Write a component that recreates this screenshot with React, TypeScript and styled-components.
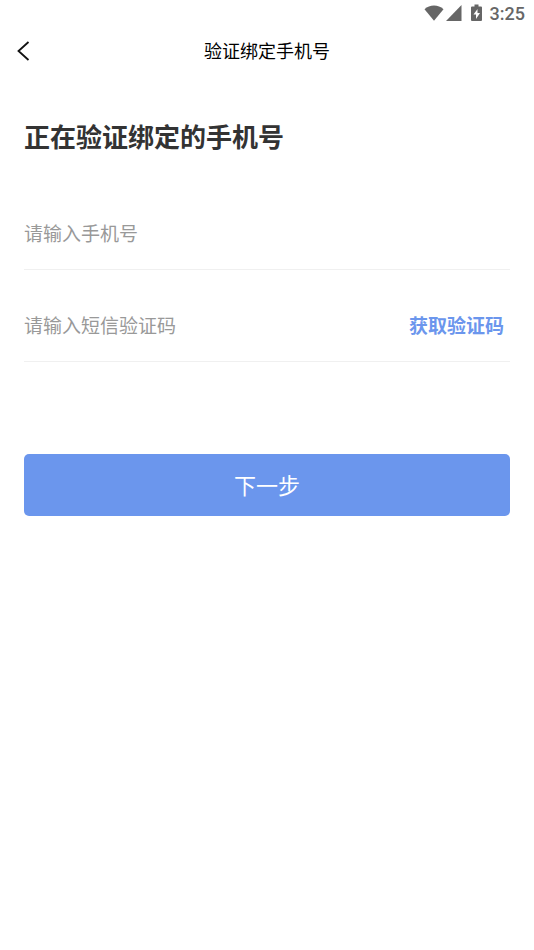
import React, { useState } from "react";
import styled, { createGlobalStyle } from "styled-components";

const GlobalStyle = createGlobalStyle`
  *, *::before, *::after { box-sizing: border-box; }
  body {
    margin: 0;
    background: #fff;
    font-family: "Noto Sans CJK SC", sans-serif;
  }
`;

const Page = styled.div`
  display: flex;
  flex-direction: column;
  min-height: 100vh;
  background: #fff;
`;

const StatusBar = styled.div`
  display: flex;
  justify-content: flex-end;
  align-items: center;
  height: 28px;
  padding-right: 9px;
  color: #666;
`;

const StatusIcons = styled.div`
  display: flex;
  align-items: center;
  height: 28px;
  padding-bottom: 2px;
`;

const StatusIcon = styled.svg<{ $gap: number }>`
  display: block;
  margin-right: ${({ $gap }) => $gap}px;
  fill: currentColor;
`;

const Clock = styled.time`
  font: 500 18px/28px Roboto, sans-serif;
`;

const NavBar = styled.header`
  display: grid;
  grid-template-columns: 48px 1fr 48px;
  height: 46px;
`;

const BackButton = styled.button`
  display: flex;
  align-items: center;
  height: 46px;
  padding: 0 0 0 16px;
  border: 0;
  background: none;
  color: #111;
`;

const NavTitle = styled.h1`
  margin: 0;
  text-align: center;
  font-size: 18px;
  font-weight: 400;
  line-height: 44px;
  color: #000;
`;

const Form = styled.form`
  display: flex;
  flex-direction: column;
  padding: 44px 24px 0;
`;

const Heading = styled.h2`
  margin: 0 0 24px;
  font-size: 26px;
  font-weight: 700;
  line-height: 36px;
  color: #333;
`;

const Field = styled.div`
  display: flex;
  align-items: center;
  height: 92px;
  padding-top: 18px;
  border-bottom: 1px solid #f0f0f0;
`;

const TextInput = styled.input`
  flex: 1;
  min-width: 0;
  padding: 0;
  border: 0;
  outline: 0;
  background: none;
  font: 400 19px/28px "Noto Sans CJK SC", sans-serif;
  color: #333;
  &::placeholder { color: #999; opacity: 1; }
`;

const CodeButton = styled.button`
  padding: 0 6px;
  border: 0;
  background: none;
  font: 700 19px/28px "Noto Sans CJK SC", sans-serif;
  color: #6b96ed;
`;

const SubmitButton = styled.button`
  height: 62px;
  margin-top: 92px;
  padding: 0 0 2px;
  border: 0;
  border-radius: 5px;
  background: #6b96ed;
  font: 400 22px/32px "Noto Sans CJK SC", sans-serif;
  color: #fff;
`;

export default function App() {
  const [phone, setPhone] = useState("");
  const [code, setCode] = useState("");
  return (
    <Page>
      <GlobalStyle />
      <StatusBar>
        <StatusIcons>
          <StatusIcon $gap={2} width="20" height="16" viewBox="0 0 20 16" aria-hidden="true">
            <path d="M0.500 4.200C3.200 1.800 6.400.5 10 .5s6.800 1.300 9.500 3.700L10 15.800z" />
          </StatusIcon>
          <StatusIcon $gap={9} width="16" height="16" viewBox="0 0 16 16" aria-hidden="true">
            <path d="M15.500 0v16H0z" />
          </StatusIcon>
          <StatusIcon $gap={8} width="11" height="18" viewBox="0 0 11 18" aria-hidden="true">
            <path fillRule="evenodd" d="M3.500 0.500h4v2H10q1 0 1 1v12.500q0 1-1 1H1q-1 0-1-1V3.500q0-1 1-1h2.500zM6.500 5L2.500 10.500H5v4.500l4-6H6.500z" />
          </StatusIcon>
        </StatusIcons>
        <Clock>3:25</Clock>
      </StatusBar>
      <NavBar>
        <BackButton type="button" aria-label="返回">
          <svg width="14" height="20" viewBox="0 0 14 20" fill="none" aria-hidden="true">
            <path d="M12.500 1L2.500 10l10 9" stroke="currentColor" strokeWidth="1.800" />
          </svg>
        </BackButton>
        <NavTitle>验证绑定手机号</NavTitle>
      </NavBar>
      <Form onSubmit={(e) => e.preventDefault()}>
        <Heading>正在验证绑定的手机号</Heading>
        <Field>
          <TextInput type="tel" aria-label="手机号" placeholder="请输入手机号" value={phone} onChange={(e) => setPhone(e.target.value)} />
        </Field>
        <Field>
          <TextInput type="text" inputMode="numeric" aria-label="短信验证码" placeholder="请输入短信验证码" value={code} onChange={(e) => setCode(e.target.value)} />
          <CodeButton type="button">获取验证码</CodeButton>
        </Field>
        <SubmitButton type="submit">下一步</SubmitButton>
      </Form>
    </Page>
  );
}
